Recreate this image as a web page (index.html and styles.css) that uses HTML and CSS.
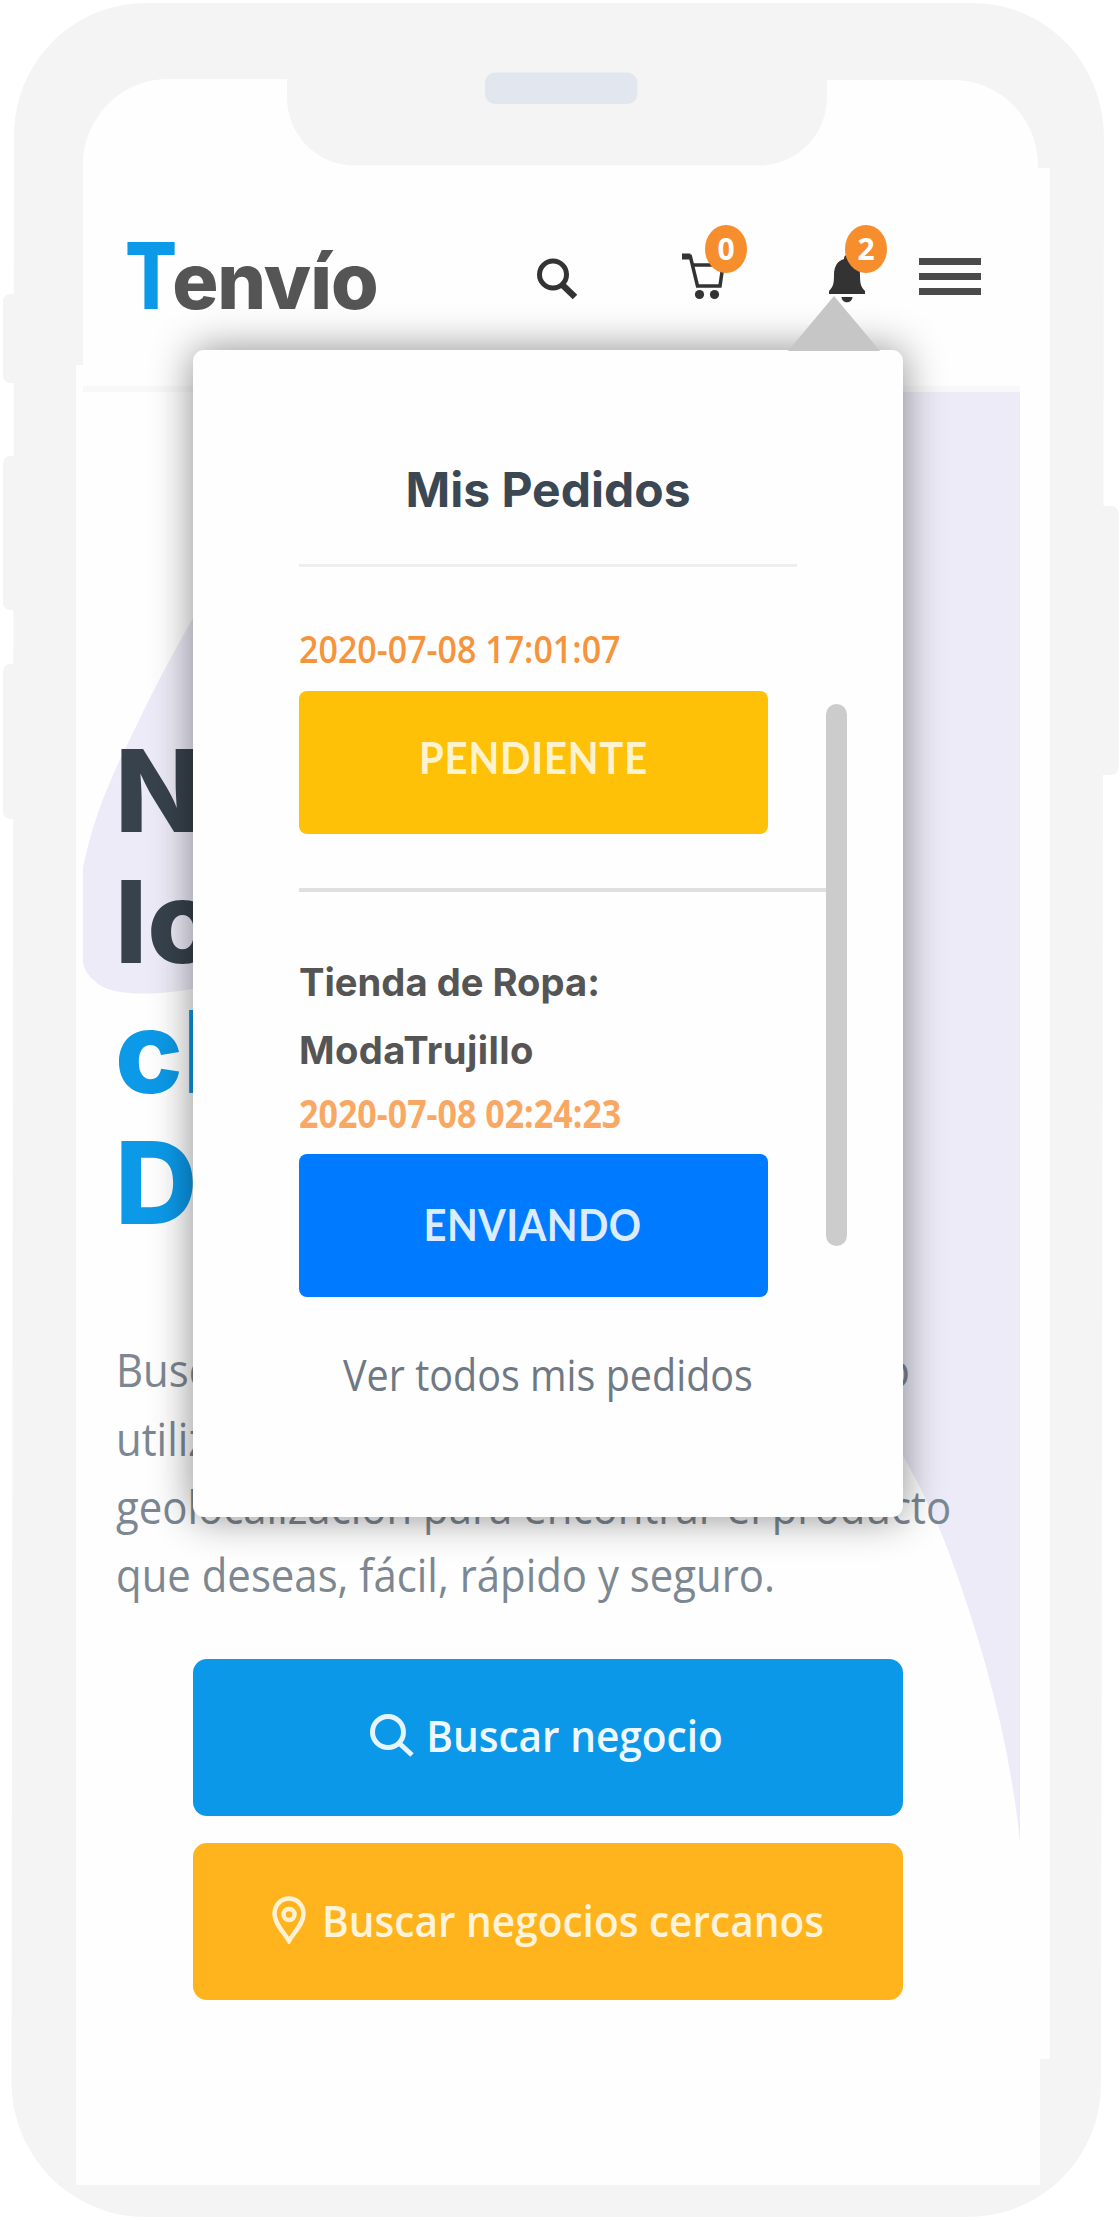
FILE: index.html
```html
<!DOCTYPE html>
<html lang="es">
<head>
<meta charset="utf-8">
<title>Tenvío</title>
<link rel="stylesheet" href="styles.css">
</head>
<body>
<div class="phone">
  <svg class="frame" viewBox="0 0 1120 2220" aria-hidden="true">
    <g fill="#f4f4f4">
      <rect x="3" y="294" width="24" height="89" rx="7"/>
      <rect x="3" y="456" width="24" height="154" rx="7"/>
      <rect x="3" y="664" width="24" height="155" rx="7"/>
      <rect x="1090" y="506" width="28.500" height="269" rx="7"/>
      <path d="M146 3H972C1046 3 1104 63 1104 137L1101 2083C1101 2158 1042 2217 967 2217H146C71 2217 11.500 2156 11.500 2081L14 137C14 63 72 3 146 3Z"/>
    </g>
    <path fill="#fefefe" d="M168 79H287V97C287 135 317 165.500 355 165.500H758C797 165.500 827 135 827 97V80H953C1000 80 1038 118 1038 165V168H1050V2059H1040V2185H76V365H83V165C83 118 121 79 168 79Z"/>
    <rect x="485" y="72.500" width="152.500" height="31.500" rx="10" fill="#e2e7ef"/>
  </svg>

  <main class="screen">
    <header class="topbar">
      <a class="logo"><span class="logo-initial">T</span>envío</a>
      <svg class="icon-search" viewBox="0 0 42 44"><circle cx="17" cy="18.500" r="13.500" fill="none" stroke="#333" stroke-width="5"/><path d="M26.500 29L39 41" stroke="#333" stroke-width="6.500"/></svg>
      <div class="badged cart">
        <svg viewBox="0 0 44 48" width="44" height="48" fill="none" stroke="#333"><path d="M0 4.500H8.500" stroke-width="6"/><path d="M8 3L15.500 34H38L41 13H10" stroke-width="3.500"/><circle cx="17.500" cy="42.500" r="4.600" fill="#333" stroke="none"/><circle cx="32.500" cy="42.500" r="4.600" fill="#333" stroke="none"/></svg>
        <span class="badge">0</span>
      </div>
      <div class="badged bell">
        <svg viewBox="0 0 36 48" width="36" height="48" fill="#333"><path d="M18 0C20 0 21 1.500 21 4C28 6 31 12 31 20C31 29 32 32 36 36V39H0V36C4 32 5 29 5 20C5 12 8 6 15 4C15 1.500 16 0 18 0Z"/><path d="M12.500 42H23.500C23 49 13 49 12.500 42Z"/></svg>
        <span class="badge">2</span>
      </div>
      <div class="burger"><i></i><i></i><i></i></div>
    </header>

    <section class="hero">
      <svg class="blob" viewBox="83 392 937 1460" aria-hidden="true"><path fill="#ecebf7" d="M420 392H1020V1842C1010 1745 985 1650 948 1550C900 1425 820 1330 700 1200C560 1000 330 975 193 989C140 998 105 993 95 981Q84 973 83 962V868C95 810 115 770 129 741Q160 675 193 618C240 530 320 440 420 392Z"/></svg>
      <h1 class="title">
        <span>N</span>
        <span>lo</span>
        <span class="accent">cl</span>
        <span class="accent">D</span>
      </h1>
      <p class="lead">
        <span class="split"><b>Busc</b><b>o</b></span>
        <span>utiliz</span>
        <span>geolocalización para encontrar el producto</span>
        <span>que deseas, fácil, rápido y seguro.</span>
      </p>
      <div class="actions">
        <a class="action primary">
          <svg width="44" height="46" viewBox="0 0 44 46" fill="none" stroke="#e6f4fd"><circle cx="18" cy="20" r="15.500" stroke-width="5"/><path d="M29 31L42 43" stroke-width="5"/></svg>
          <span>Buscar negocio</span>
        </a>
        <a class="action secondary">
          <svg width="34" height="48" viewBox="0 0 34 48" fill="none" stroke="#fff1d6" stroke-width="4.500"><path d="M17 45C12 36 2.500 28 2.500 18C2.500 9 9 2.500 17 2.500S31.500 9 31.500 18C31.500 28 22 36 17 45Z"/><circle cx="17" cy="18.500" r="5.500"/></svg>
          <span>Buscar negocios cercanos</span>
        </a>
      </div>
    </section>

    <aside class="orders">
      <i class="pointer"></i>
      <h2 class="orders-title"><span>Mis Pedidos</span></h2>
      <time class="date">2020-07-08 17:01:07</time>
      <div class="status pending"><span>PENDIENTE</span></div>
      <hr class="rule">
      <p class="shop"><span class="shop-kind">Tienda de Ropa:</span><span class="shop-name">ModaTrujillo</span></p>
      <time class="date faded">2020-07-08 02:24:23</time>
      <div class="status sending"><span>ENVIANDO</span></div>
      <a class="see-all">Ver todos mis pedidos</a>
      <i class="scrollbar"></i>
    </aside>
  </main>
</div>
</body>
</html>
```

FILE: styles.css
```css
* { box-sizing: border-box; }
body { margin: 0; background: #fff; }
h1, h2, p { margin: 0; font-weight: inherit; }
svg { display: block; flex: none; }

.phone {
  position: relative;
  width: 1120px;
  height: 2220px;
  overflow: hidden;
  font-family: "Open Sans", "Noto Sans", sans-serif;
}
.frame { position: absolute; inset: 0; width: 1120px; height: 2220px; }
.screen { position: relative; width: 937px; margin: 168px 0 0 83px; }

/* Top bar */
.topbar {
  display: flex;
  align-items: flex-start;
  height: 224px;
  padding-left: 42px;
  border-bottom: 6px solid #f8f8f8;
}
.logo {
  width: 252px;
  margin: 73px 159px 0 0;
  font: 800 77px/80px Inter, sans-serif;
  letter-spacing: -1px;
  color: #555;
  white-space: nowrap;
}
.logo-initial {
  display: inline-block;
  margin-right: -4px;
  color: #0c99e8;
  transform: scaleY(1.2);
  transform-origin: 0 84.500%;
}
.icon-search { width: 42px; height: 44px; margin-top: 88px; }
.badged { position: relative; }
.cart { margin: 84px 0 0 104px; }
.bell { margin: 87px 0 0 103px; }
.badge {
  position: absolute;
  top: -27px;
  left: 23px;
  width: 42px;
  height: 48px;
  border-radius: 50%;
  background: #f68e2e;
  color: #fff;
  font-weight: 700;
  font-size: 30px;
  line-height: 47px;
  text-align: center;
}
.bell .badge { top: -30px; left: 16px; }
.burger { display: grid; gap: 8px; width: 62px; margin: 90px 0 0 54px; }
.burger i { height: 7px; background: #4a4a4a; }

/* Hero */
.hero { position: relative; padding-top: 334px; }
.blob { position: absolute; top: 0; left: 0; width: 937px; height: 1460px; }
.title {
  position: relative;
  padding-left: 32px;
  font: 800 114px/130.600px Inter, sans-serif;
  color: #37424c;
}
.title span, .lead > span { display: block; white-space: nowrap; }
.title .accent { color: #0c99e8; }
.lead {
  position: relative;
  width: 794px;
  margin: 88px 0 0 33px;
  font-size: 41.900px;
  line-height: 68.300px;
  color: #7d8791;
}
.lead > span { transform: scaleY(1.07); }
.lead .split { display: flex; justify-content: space-between; }
.lead b { font-weight: inherit; }
.actions { position: relative; display: grid; gap: 27px; width: 710px; margin: 49px 0 0 110px; }
.action {
  display: flex;
  align-items: center;
  justify-content: center;
  gap: 12px;
  height: 157px;
  padding-bottom: 4px;
  border-radius: 14px;
  color: #eff8fe;
  font-weight: 600;
  font-size: 40.600px;
  white-space: nowrap;
}
.action span { transform: scaleY(1.09); }
.primary { padding-right: 3px; background: #0b98e8; }
.secondary { padding-bottom: 2px; background: #ffb31c; color: #fff3dc; gap: 16px; }

/* Orders menu */
.orders {
  position: absolute;
  top: 182px;
  left: 110px;
  width: 710px;
  height: 1167px;
  padding: 110px 0 0 106px;
  border-radius: 11px;
  background: #fefefe;
  box-shadow: 0 0 42px rgba(0, 0, 0, .45);
}
.pointer {
  position: absolute;
  top: -54px;
  left: 595px;
  width: 92px;
  height: 55px;
  background: #c6c6c6;
  clip-path: polygon(50% 0, 100% 100%, 0 100%);
}
.orders-title {
  width: 498px;
  padding-bottom: 44px;
  border-bottom: 3px solid #eee;
  font: 700 48px/60px Inter, sans-serif;
  color: #3b4752;
  text-align: center;
  white-space: nowrap;
}
.date {
  display: block;
  margin-top: 61px;
  font-weight: 600;
  font-size: 34px;
  line-height: 40px;
  color: #f6943c;
  transform: scaleY(1.14);
}
.status {
  display: flex;
  align-items: center;
  justify-content: center;
  width: 469px;
  height: 143px;
  margin-top: 23px;
  padding-bottom: 12px;
  border-radius: 8px;
  font: 700 40px/48px Lato, sans-serif;
  letter-spacing: .800px;
}
.status span { transform: scaleY(1.12); }
.pending { background: #ffc107; color: #fff3cf; }
.sending { margin-top: 21px; padding: 0 2px 4px 0; background: #007bff; color: #dcecff; letter-spacing: .400px; }
.rule { width: 527px; height: 4px; margin: 54px 0 0; border: 0; background: #e0e0e0; }
.shop { margin-top: 56px; font: 700 38.200px/68px Inter, sans-serif; color: #555; }
.shop span { display: block; white-space: nowrap; }
.shop-name { letter-spacing: .400px; }
.faded { margin-top: 9px; font-weight: 700; color: #f9a863; }
.see-all {
  display: block;
  width: 498px;
  margin-top: 54px;
  font-size: 39.500px;
  line-height: 48px;
  text-align: center;
  color: #6f7983;
  transform: scaleY(1.09);
}
.scrollbar {
  position: absolute;
  top: 354px;
  left: 633px;
  width: 21px;
  height: 542px;
  border-radius: 11px;
  background: #ccc;
}
```
